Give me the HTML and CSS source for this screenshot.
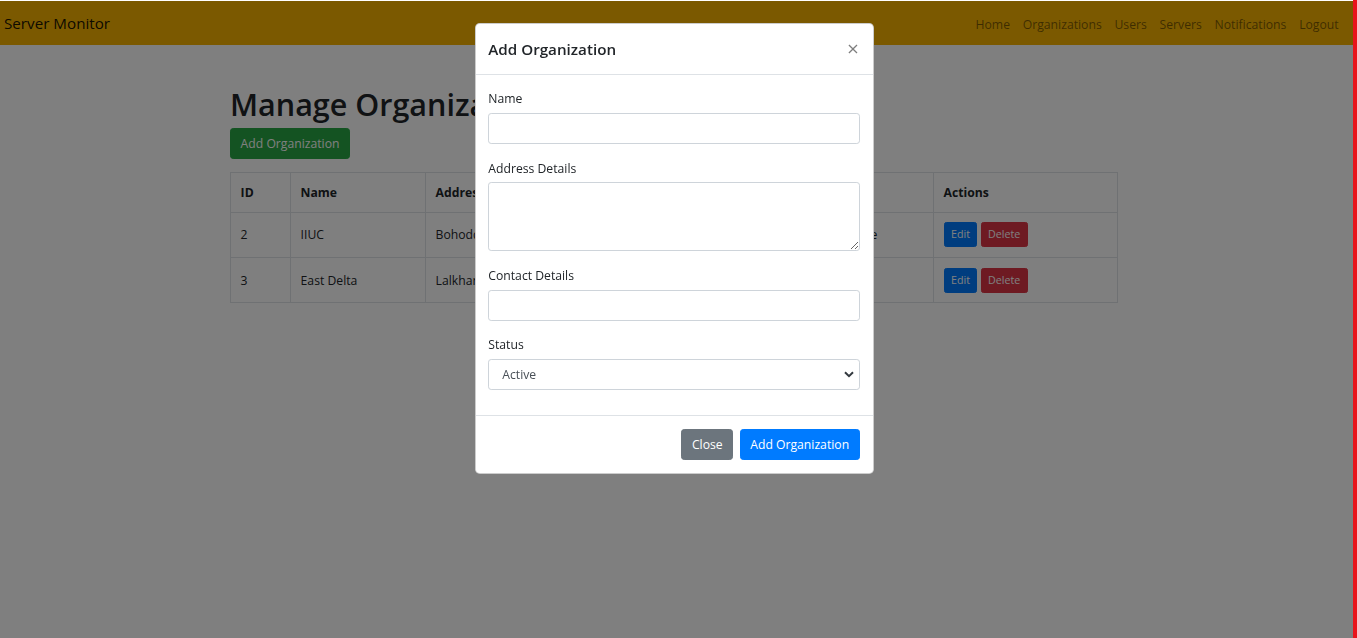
FILE: index.html
```html
<!DOCTYPE html>
<html lang="en">
<head>
<meta charset="utf-8">
<title>Manage Organizations</title>
<link rel="stylesheet" href="styles.css">
</head>
<body>
<div class="topline"></div>
<nav class="navbar">
  <a class="brand" href="#">Server Monitor</a>
  <ul class="nav-links">
    <li><a href="#">Home</a></li>
    <li><a href="#">Organizations</a></li>
    <li><a href="#">Users</a></li>
    <li><a href="#">Servers</a></li>
    <li><a href="#">Notifications</a></li>
    <li><a href="#">Logout</a></li>
  </ul>
</nav>
<div class="page">
  <main class="container">
    <h1 class="title">Manage Organizations</h1>
    <button class="btn btn-success btn-add">Add Organization</button>
    <table class="table">
      <colgroup>
        <col class="c-id"><col class="c-name"><col class="c-addr"><col class="c-contact"><col class="c-status"><col class="c-actions">
      </colgroup>
      <thead>
        <tr><th>ID</th><th>Name</th><th>Address</th><th>Contact</th><th>Status</th><th>Actions</th></tr>
      </thead>
      <tbody>
        <tr>
          <td>2</td><td>IIUC</td><td>Bohoddarhat, Chattogram</td><td>01800000000</td><td>Inactive</td>
          <td><button class="btn btn-sm btn-primary">Edit</button> <button class="btn btn-sm btn-danger">Delete</button></td>
        </tr>
        <tr>
          <td>3</td><td>East Delta</td><td>Lalkhan Bazar, Chattogram</td><td>01900000000</td><td>Active</td>
          <td><button class="btn btn-sm btn-primary">Edit</button> <button class="btn btn-sm btn-danger">Delete</button></td>
        </tr>
      </tbody>
    </table>
  </main>
</div>

<div class="backdrop"></div>
<div class="edge"></div>

<div class="modal">
  <div class="modal-dialog">
    <div class="modal-content">
      <div class="modal-header">
        <h5 class="modal-title">Add Organization</h5>
        <button class="close" aria-label="Close">&times;</button>
      </div>
      <div class="modal-body">
        <div class="form-group">
          <label>Name</label>
          <input class="form-control" type="text">
        </div>
        <div class="form-group">
          <label>Address Details</label>
          <textarea class="form-control" rows="3"></textarea>
        </div>
        <div class="form-group">
          <label>Contact Details</label>
          <input class="form-control" type="text">
        </div>
        <div class="form-group">
          <label>Status</label>
          <select class="form-control select">
            <option>Active</option>
            <option>Inactive</option>
          </select>
        </div>
      </div>
      <div class="modal-footer">
        <button class="btn btn-secondary">Close</button>
        <button class="btn btn-primary">Add Organization</button>
      </div>
    </div>
  </div>
</div>
</body>
</html>
```

FILE: styles.css
```css
* { box-sizing: border-box; }

html, body {
  margin: 0;
  padding: 0;
  height: 100%;
}

body {
  font-family: "Open Sans", "Noto Sans", "Liberation Sans", sans-serif;
  font-size: 12.2px;
  line-height: 19.2px;
  color: #212529;
  background: #fff;
  overflow: hidden;
}

.topline {
  height: 1px;
  background: #fff;
}

.navbar {
  display: flex;
  align-items: center;
  justify-content: space-between;
  height: 44px;
  padding: 0 12px 0 4px;
  background: #f6b200;
}

.brand {
  font-size: 15.2px;
  color: rgba(0, 0, 0, 0.9);
  text-decoration: none;
  line-height: 24px;
  margin-top: -1px;
}

.nav-links {
  display: flex;
  list-style: none;
  margin: 0;
  padding: 3px 0 0;
}

.nav-links a {
  display: block;
  padding: 6.4px 6.4px;
  color: rgba(0, 0, 0, 0.5);
  text-decoration: none;
}

.page {
  width: 1347px;
}

.container {
  width: 887px;
  margin: 0 auto;
}

.title {
  font-size: 30.5px;
  font-weight: 600;
  line-height: 38.4px;
  margin: 40px 0 5px;
}

.btn {
  display: inline-block;
  font-family: inherit;
  font-size: 12.2px;
  line-height: 19.2px;
  padding: 4.8px 9.6px;
  border: 1px solid transparent;
  border-radius: 3.2px;
  color: #fff;
  cursor: pointer;
  vertical-align: middle;
}

.btn-add {
  display: block;
  margin-bottom: 13px;
}

.btn-success { background: #28a745; border-color: #28a745; }
.btn-primary { background: #007bff; border-color: #007bff; }
.btn-danger { background: #dc3545; border-color: #dc3545; }
.btn-secondary { background: #6c757d; border-color: #6c757d; }

.btn-sm {
  font-size: 10.7px;
  line-height: 16.8px;
  padding: 3.2px 6.4px;
  border-radius: 2.4px;
}

.table {
  width: 887px;
  table-layout: fixed;
  border-collapse: collapse;
  color: #212529;
  font-size: 12.2px;
}

.c-id { width: 60px; }
.c-name { width: 135px; }
.c-addr { width: 215px; }
.c-contact { width: 183px; }
.c-status { width: 110px; }
.c-actions { width: 184px; }

.table th,
.table td {
  border: 1px solid #dee2e6;
  padding: 9.6px;
  text-align: left;
  vertical-align: middle;
  white-space: nowrap;
  overflow: hidden;
}

.table th { font-weight: 700; }

.backdrop {
  position: fixed;
  top: 1px;
  left: 0;
  right: 0;
  bottom: 0;
  background: #000;
  opacity: 0.5;
}

.edge {
  position: fixed;
  top: 0;
  right: 0;
  bottom: 0;
  width: 4px;
  background: #e8141c;
}

.modal {
  position: fixed;
  top: 0;
  left: 0;
  width: 1348px;
  height: 100%;
}

.modal-dialog {
  width: 399px;
  margin: 23px auto 0;
}

.modal-content {
  background: #fff;
  border: 1px solid rgba(0, 0, 0, 0.2);
  border-radius: 4.8px;
}

.modal-header {
  display: flex;
  align-items: flex-start;
  justify-content: space-between;
  padding: 12.8px;
  border-bottom: 1px solid #dee2e6;
}

.modal-title {
  margin: 0;
  font-size: 15.2px;
  font-weight: 600;
  line-height: 24px;
}

.close {
  background: none;
  border: 0;
  padding: 12.8px;
  margin: -12.8px -12.8px -12.8px auto;
  font-family: "DejaVu Sans", sans-serif;
  font-size: 16px;
  font-weight: 400;
  line-height: 24px;
  color: #000;
  opacity: 0.5;
  cursor: pointer;
}

.modal-body {
  padding: 12.8px;
}

.form-group {
  margin-bottom: 12.8px;
}

.form-group label {
  display: block;
  padding-top: 2px;
  margin-bottom: 4.4px;
}

.form-control {
  display: block;
  width: 100%;
  height: 30.8px;
  padding: 4.8px 9.6px;
  font-family: inherit;
  font-size: 12.2px;
  line-height: 19.2px;
  color: #495057;
  background: #fff;
  border: 1px solid #ced4da;
  border-radius: 3.2px;
}

textarea.form-control {
  height: 69.2px;
  resize: vertical;
}

.select {
  appearance: none;
  -webkit-appearance: none;
  padding-left: 13px;
  background-image: url("data:image/svg+xml,%3Csvg xmlns='http://www.w3.org/2000/svg' width='10' height='7' viewBox='0 0 10 7'%3E%3Cpath d='M1 1.2l4 4 4-4' fill='none' stroke='%23343a40' stroke-width='2'/%3E%3C/svg%3E");
  background-repeat: no-repeat;
  background-position: right 5px center;
  background-size: 10px 7px;
}

.modal-footer {
  display: flex;
  justify-content: flex-end;
  align-items: center;
  padding: 9.6px;
  border-top: 1px solid #dee2e6;
}

.modal-footer .btn {
  margin: 3.2px;
}
```
